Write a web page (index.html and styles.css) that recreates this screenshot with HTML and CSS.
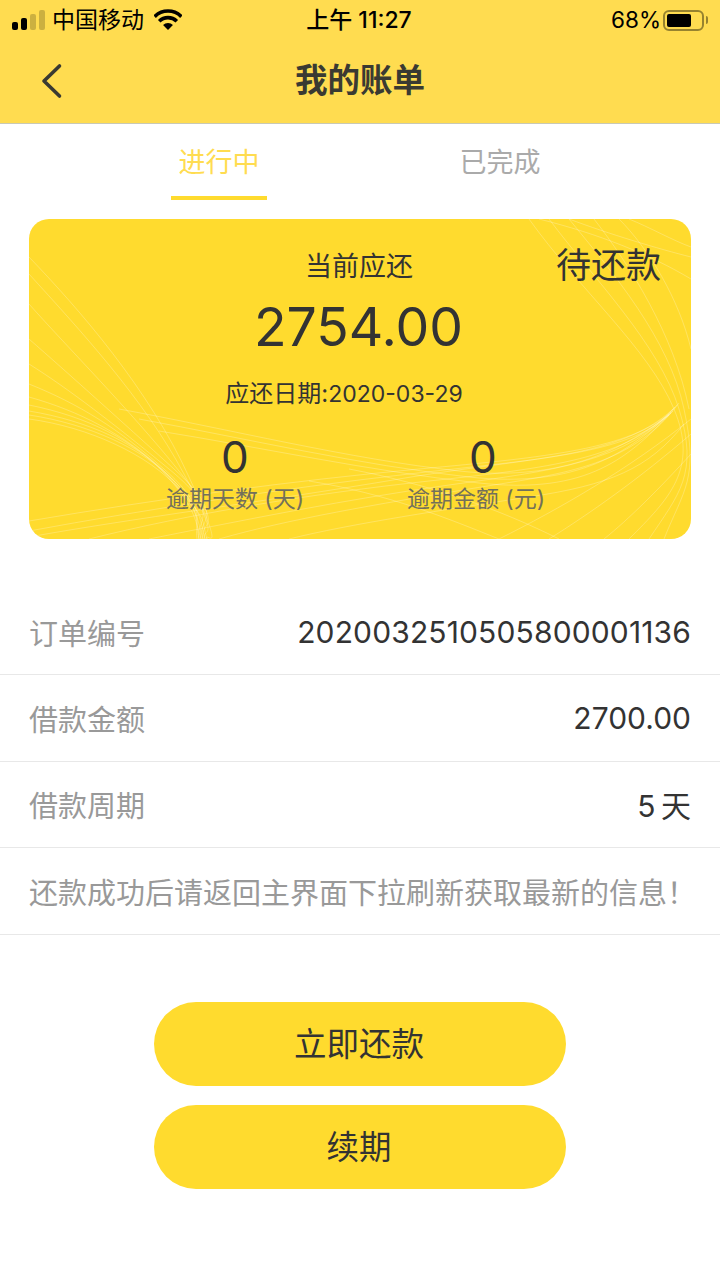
FILE: index.html
```html
<!DOCTYPE html>
<html lang="zh-CN">
<head>
<meta charset="utf-8">
<title>我的账单</title>
<link rel="stylesheet" href="styles.css">
</head>
<body>
<header class="top">
  <div class="status">
    <div class="status-left">
      <span class="signal"><i class="on b1"></i><i class="on b2"></i><i class="b3"></i><i class="b4"></i></span>
      <span class="carrier">中国移动</span>
      <svg class="wifi" width="28" height="21" viewBox="0 0 28 21"><path d="M14 21 L9.050 16.050 A7 7 0 0 1 18.950 16.050Z" fill="#000"/><path d="M5.200 12.200 A12.500 12.500 0 0 1 22.800 12.200" fill="none" stroke="#000" stroke-width="3.600"/><path d="M0.600 7.600 A19 19 0 0 1 27.400 7.600" fill="none" stroke="#000" stroke-width="3.600"/></svg>
    </div>
    <div class="clock">上午 11:27</div>
    <div class="status-right">
      <span class="pct">68%</span>
      <span class="battery"><span class="level"></span></span>
      <span class="nub"></span>
    </div>
  </div>
  <div class="nav">
    <svg class="back" width="24" height="38" viewBox="0 0 24 38"><path d="M19.500 4 L4 19 L19.500 34" fill="none" stroke="#3a3a32" stroke-width="3.600" stroke-linecap="round" stroke-linejoin="round"/></svg>
    <h1 class="title">我的账单</h1>
  </div>
</header>

<nav class="tabs">
  <div class="tab active">进行中</div>
  <div class="tab">已完成</div>
</nav>

<section class="card">
  <svg class="waves" viewBox="0 0 662 320" preserveAspectRatio="none" aria-hidden="true">
    <g class="wave-lines">
      <path d="M0 38 C50 90 120 170 160 258 S175 310 178 320"/>
      <path d="M0 55 C50 110 115 180 155 255 S172 305 176 320"/>
      <path d="M0 85 C40 130 100 190 150 252 S170 300 174 320"/>
      <path d="M0 120 C40 155 90 200 145 250 S168 300 172 320"/>
      <path d="M0 145 C40 170 85 205 140 250 S166 300 170 320"/>
      <path d="M0 165 C50 185 90 210 135 250 S165 300 168 320"/>
      <path d="M0 178 C50 192 95 215 135 252 S165 300 170 320"/>
      <path d="M0 186 C60 198 105 222 135 254 S166 300 172 320"/>
      <path d="M0 192 C60 202 110 225 140 258 S168 300 174 320"/>
      <path d="M0 196 C60 205 115 230 145 262 S170 300 176 320"/>
      <path d="M0 200 C60 208 120 236 150 270 S172 300 178 320"/>
      <path d="M0 312 C120 290 250 270 380 255 S600 235 640 195"/>
      <path d="M0 302 C130 280 260 262 390 250 S600 230 642 193"/>
      <path d="M0 318 C100 300 240 282 370 260 S590 240 644 190"/>
      <path d="M60 320 C160 295 280 275 400 262 S600 240 646 188"/>
      <path d="M120 320 C220 300 320 280 420 266 S600 244 648 186"/>
      <path d="M190 320 C260 300 350 285 440 270 S600 250 650 184"/>
      <path d="M90 190 C200 210 320 240 430 252 S600 225 640 196"/>
      <path d="M110 200 C220 220 330 246 440 258 S600 232 642 194"/>
      <path d="M130 212 C230 228 340 252 450 264 S600 238 644 192"/>
      <path d="M500 0 C550 70 620 130 645 190 S640 280 600 320"/>
      <path d="M520 0 C565 60 630 125 650 190 S650 275 620 320"/>
      <path d="M540 0 C585 55 640 120 655 190 S655 270 635 320"/>
      <path d="M565 0 C600 45 645 115 660 190"/>
      <path d="M590 0 C620 30 650 80 662 130"/>
      <path d="M540 0 C580 15 630 30 662 38"/>
      <path d="M510 0 C570 15 620 35 662 60"/>
      <path d="M600 0 C620 8 645 22 662 28"/>
      <path d="M662 200 C600 250 530 290 470 320"/>
      <path d="M662 215 C610 260 560 295 520 320"/>
      <path d="M662 235 C630 270 600 300 575 320"/>
      <path d="M260 320 C320 305 420 290 500 278 S620 250 655 205"/>
      <path d="M320 250 C400 265 470 290 530 320"/>
      <path d="M280 262 C360 275 420 300 470 320"/>
    </g>
  </svg>
  <div class="card-badge">待还款</div>
  <div class="due-label">当前应还</div>
  <div class="due-amount">2754.00</div>
  <div class="due-date"><span class="date-key">应还日期:</span>2020-03-29</div>
  <div class="stats">
    <div class="stat"><div class="stat-num">0</div><div class="stat-label">逾期天数 (天)</div></div>
    <div class="stat"><div class="stat-num">0</div><div class="stat-label shifted">逾期金额 (元)</div></div>
  </div>
</section>

<section class="rows">
  <div class="row"><span class="key">订单编号</span><span class="val long">2020032510505800001136</span></div>
  <div class="row"><span class="key">借款金额</span><span class="val">2700.00</span></div>
  <div class="row"><span class="key">借款周期</span><span class="val days">5 天</span></div>
  <div class="row"><span class="key">还款成功后请返回主界面下拉刷新获取最新的信息！</span></div>
</section>

<div class="actions">
  <button class="btn">立即还款</button>
  <button class="btn">续期</button>
</div>
</body>
</html>
```
FILE: styles.css
```css
* { box-sizing: border-box; margin: 0; padding: 0; }
html, body { background: #fff; }
body {
  width: 720px;
  height: 1280px;
  overflow: hidden;
  font-family: "Inter", "Noto Sans CJK SC", sans-serif;
  color: #333;
}

.top { height: 124px; background: #ffdc50; border-bottom: 1px solid #c9c9b4; }
.status {
  height: 40px;
  padding: 0 11px 0 12px;
  display: grid;
  grid-template-columns: 1fr auto 1fr;
  align-items: center;
  color: #000;
  font-size: 23px;
}
.status-left { display: flex; align-items: center; }
.signal { display: flex; align-items: flex-end; gap: 3px; height: 20px; width: 33px; margin-top: -1px; }
.signal i { display: block; width: 6px; background: rgba(0,0,0,.2); border-radius: 2px; }
.signal i.on { background: #000; }
.b1 { height: 8px; } .b2 { height: 12px; } .b3 { height: 16px; } .b4 { height: 20px; }
.carrier { margin-left: 7px; line-height: 1; }
.wifi { margin-left: 10px; margin-top: -1px; }
.clock { font-size: 23px; font-weight: 500; line-height: 1; margin-left: -3px; }
.status-right { display: flex; align-items: center; justify-content: flex-end; }
.pct { font-size: 22.500px; line-height: 1; margin-right: -3px; }
.battery {
  display: block; width: 41px; height: 21px; margin-left: 5px;
  border: 2px solid #97832f; border-radius: 6px; padding: 2px;
}
.level { display: block; width: 24px; height: 100%; background: #000; border-radius: 2px; }
.nub { display: block; width: 2px; height: 8px; margin-left: 2px; margin-right: 1px; background: #97832f; border-radius: 0 2px 2px 0; }

.nav { position: relative; height: 83px; display: flex; align-items: center; justify-content: center; }
.back { position: absolute; left: 40px; top: 22px; }
.title { font-size: 32.500px; font-weight: 700; color: #3a3a32; line-height: 1; margin-top: -1px; }

.tabs { height: 76px; display: grid; grid-template-columns: 96px 96px; column-gap: 185px; justify-content: center; margin-left: -1px; }
.tab { text-align: center; font-size: 27px; line-height: 1; padding-top: 25px; color: #aaa; white-space: nowrap; }
.tab.active { color: #ffdc50; border-bottom: 4px solid #ffdb2e; }

.card {
  position: relative;
  width: 662px;
  height: 320px;
  margin: 19px 0 0 29px;
  background: #ffdb2e;
  border-radius: 20px;
  overflow: hidden;
  text-align: center;
}
.waves { position: absolute; inset: 0; width: 100%; height: 100%; }
.wave-lines path { fill: none; stroke: #fff; stroke-opacity: .24; stroke-width: 1; }
.card-badge { position: absolute; top: 25px; right: 30px; font-size: 35px; line-height: 42px; color: #333; }
.due-label { position: relative; padding-top: 33px; padding-right: 2px; font-size: 27px; line-height: 30px; color: #333; }
.due-amount { position: relative; margin-top: 15px; padding-right: 3px; font-size: 53.500px; line-height: 60px; color: #333; }
.due-date { position: relative; margin-top: 22px; padding-right: 32px; font-size: 23px; line-height: 30px; color: #333; }
.date-key { font-size: 24px; }
.stats { position: relative; margin-top: 25px; padding-left: 82px; display: flex; }
.stat { flex: none; width: 248px; }
.stat-num { font-size: 44px; line-height: 46px; color: #333; }
.stat-label { font-size: 23px; line-height: 28px; color: #73705a; margin-top: 5px; white-space: nowrap; }
.stat-label.shifted { padding-right: 14px; }

.rows { margin-top: 50px; }
.row {
  height: 86.400px;
  padding: 0 29px;
  display: flex;
  align-items: center;
  justify-content: space-between;
  border-bottom: 1px solid #e8e8e8;
}
.key { font-size: 29px; color: #999; white-space: nowrap; }
.val { font-size: 30px; color: #333; white-space: nowrap; }
.val.long { letter-spacing: .14px; }
.val.days { word-spacing: -3px; }

.actions { margin-top: 67px; display: flex; flex-direction: column; align-items: center; gap: 19px; }
.btn {
  width: 412px;
  height: 84px;
  border: 0;
  border-radius: 42px;
  background: #ffdb2e;
  font-family: inherit;
  font-size: 32.500px;
  color: #333;
  padding: 0 2px 4px 0;
}
```
